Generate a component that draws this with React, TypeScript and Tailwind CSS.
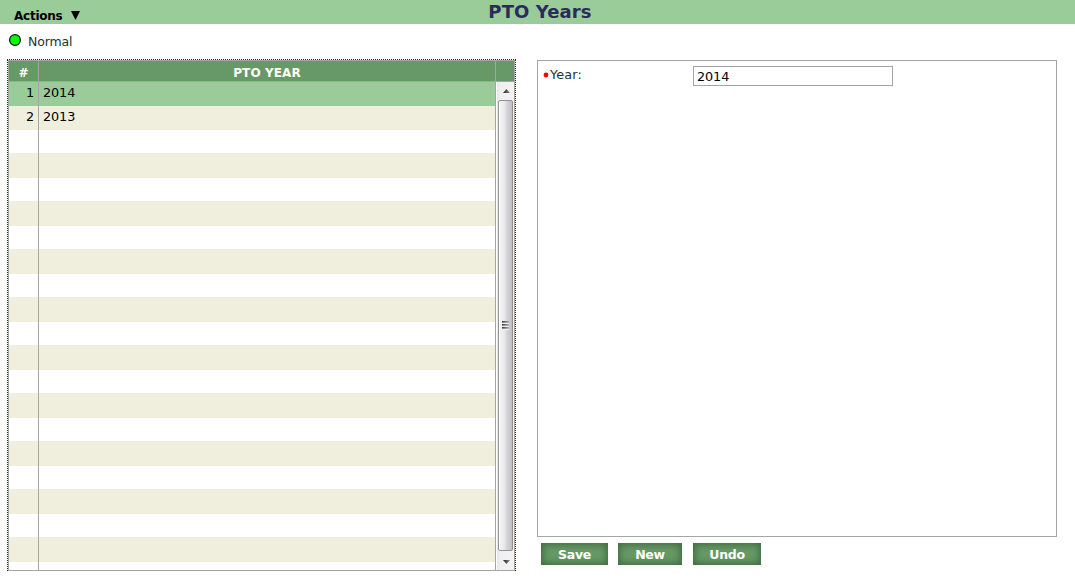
const font = "font-['DejaVu_Sans',sans-serif]";

const rows = [
  { year: "2014" }, { year: "2013" },
  ...Array.from({ length: 19 }, () => ({ year: "" })),
];

function TableRow({ index, year }: { index: number; year: string }) {
  const height = index < 2 ? "h-6" : index % 2 ? "h-[25px]" : "h-[23px]";
  const color = index === 0 ? "bg-[#99cc99]" : index % 2 ? "bg-[#f0eedd]" : "bg-white";
  return (
    <div className={`flex shrink-0 ${height} ${color} text-[12.800px] leading-[22px] tracking-[-0.1px] text-black`}>
      <div className="w-[30px] shrink-0 border-r border-[#a5a5a5] pr-1 text-right">{year && index + 1}</div>
      <div className="pl-1">{year}</div>
    </div>
  );
}

function Scrollbar() {
  return (
    <svg className="block h-[488px] w-[18px] shrink-0" viewBox="0 0 18 488" shapeRendering="crispEdges">
      <defs>
        <linearGradient id="track"><stop stopColor="#e6e6e6" /><stop offset=".2" stopColor="#f0f0f0" /><stop offset="1" stopColor="#f3f3f3" /></linearGradient>
        <linearGradient id="thumb"><stop stopColor="#f5f5f5" /><stop offset=".45" stopColor="#e8e8ea" /><stop offset=".55" stopColor="#d9d9dc" /><stop offset="1" stopColor="#bcbcc1" /></linearGradient>
        <linearGradient id="grip"><stop stopColor="#333" /><stop offset="1" stopColor="#aaa" /></linearGradient>
        <linearGradient id="arrow"><stop stopColor="#222" /><stop offset="1" stopColor="#888" /></linearGradient>
      </defs>
      <rect width="18" height="488" fill="#fff" />
      <rect x="1" width="17" height="488" fill="url(#track)" />
      <path d="M7 11h7L10.500 7Z" fill="url(#arrow)" shapeRendering="geometricPrecision" />
      <rect x="2.500" y="18.500" width="14" height="450" rx="1.500" fill="url(#thumb)" stroke="#929292" shapeRendering="geometricPrecision" />
      <path d="M3.500 20v447" stroke="#fff" />
      {[239, 242, 245].map((y) => (
        <g key={y}>
          <rect x="6" y={y} width="7" height="1" fill="url(#grip)" />
          <rect x="6" y={y + 1} width="7" height="1" fill="url(#grip)" opacity=".6" />
          <rect x="6" y={y + 2} width="7" height="1" fill="#f0f0f0" />
        </g>
      ))}
      <path d="M7 478h7l-3.500 4Z" fill="url(#arrow)" shapeRendering="geometricPrecision" />
    </svg>
  );
}

function ActionButton({ label, width }: { label: string; width: string }) {
  return (
    <button className={`${width} h-[22px] bg-[#669966] pt-px text-center text-[12.500px] leading-[21px] font-bold tracking-[-0.3px] text-white shadow-[inset_0_0_7px_2px_#426b42]`}>
      {label}
    </button>
  );
}

export default function App() {
  return (
    <div className={`flex h-[585px] w-[1075px] flex-col overflow-hidden bg-white text-[13px] ${font}`}>
      <header className="grid h-6 shrink-0 grid-cols-[1fr_auto_1fr] bg-[#99cc99]">
        <div className="flex pt-[6px] pl-[14px] leading-5 font-bold text-black">
          <span className="w-[57px] text-[12px] tracking-[-0.25px]">Actions</span>
          <svg className="mt-[5px] h-[9px] w-[9px]" viewBox="0 0 9 9"><path d="M0 0h9L4.500 9Z" /></svg>
        </div>
        <h1 className="pl-[5px] text-[18px] leading-[23px] font-bold tracking-[0.1px] text-[#2b2b5b]">PTO Years</h1>
      </header>
      <div className="flex h-[35px] shrink-0 pl-[9px] text-[#1b3333]">
        <svg className="mt-[10px] h-3 w-3" viewBox="0 0 12 12"><circle cx="6" cy="6" r="5.400" fill="#0f0" stroke="#111" strokeWidth="1.200" /></svg>
        <span className="pt-[8px] pl-[7px] text-[12.500px] leading-5 tracking-[-0.15px]">Normal</span>
      </div>
      <main className="flex pl-[7px]">
        <section className="h-[512px] w-[509px] shrink-0 border border-b-0 border-dotted border-[#004000]">
          <div className="flex h-[511px] flex-col border border-[#a5a5a5]">
            <div className="flex h-[21px] shrink-0 border-b border-[#a5a5a5] bg-[#669966] text-center text-[12px] font-bold text-white">
              <div className="w-[30px] border-r border-[#a5a5a5] pt-[2px] leading-[20px]">#</div>
              <div className="w-[457px] border-r border-[#a5a5a5] pt-[2px] leading-[20px] tracking-[0.1px]">PTO YEAR</div>
            </div>
            <div className="flex min-h-0 flex-1">
              <div className="flex w-[487px] flex-col overflow-hidden border-r border-[#a5a5a5]">
                {rows.map((row, index) => <TableRow key={index} index={index} year={row.year} />)}
              </div>
              <Scrollbar />
            </div>
          </div>
        </section>
        <section className="mt-px ml-[21px]">
          <div className="flex h-[477px] w-[520px] border border-[#a5a5a5] pt-[5px] pl-[5px]">
            <div className="flex h-5 w-[150px] pt-px text-[12.800px] leading-[16px] tracking-[0.15px] text-[#1b3333]">
              <svg className="mt-[5px] mr-px h-[6px] w-[6px]" viewBox="0 0 6 6"><circle cx="3" cy="3" r="2.400" fill="red" /></svg>
              <label htmlFor="year">Year:</label>
            </div>
            <input id="year" defaultValue="2014" className="h-5 w-[200px] border border-[#a5a5a5] px-[3px] pt-px text-[12.800px] leading-[18px] tracking-[-0.1px] text-black outline-none" />
          </div>
          <div className="mt-[6px] flex pl-1">
            <ActionButton label="Save" width="w-[67px] mr-[10px]" />
            <ActionButton label="New" width="w-[64px] mr-[11px]" />
            <ActionButton label="Undo" width="w-[68px]" />
          </div>
        </section>
      </main>
    </div>
  );
}
